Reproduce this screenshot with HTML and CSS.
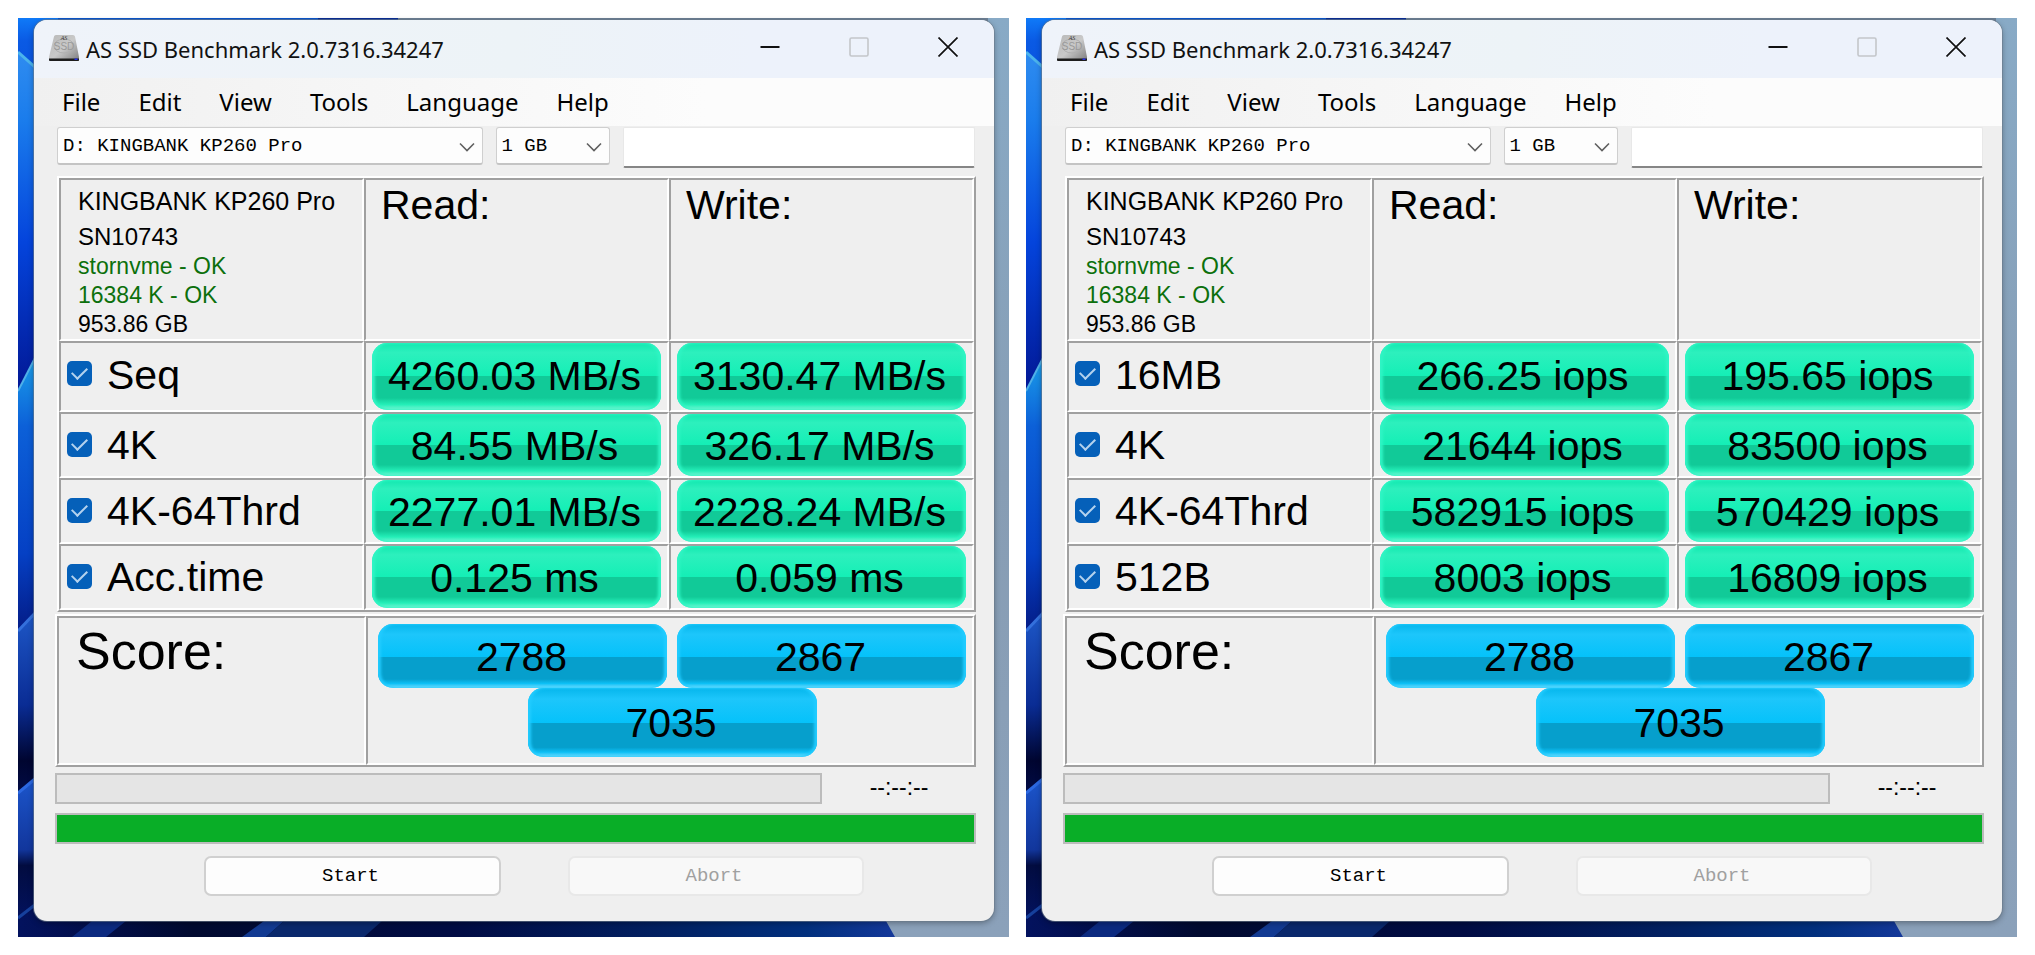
FILE: index.html
```html
<!DOCTYPE html>
<html lang="en">
<head>
<meta charset="utf-8">
<title>AS SSD Benchmark</title>
<link rel="stylesheet" href="styles.css">
</head>
<body>
<svg class="defs" aria-hidden="true">
  <defs>
    <linearGradient id="sky" x1="0" y1="0" x2="0" y2="1">
      <stop offset="0" stop-color="#0f7af8"/><stop offset=".06" stop-color="#0a5ae4"/><stop offset=".5" stop-color="#0438c8"/><stop offset="1" stop-color="#02108c"/>
    </linearGradient>
    <linearGradient id="petal" x1="0" y1="0" x2="0" y2="1">
      <stop offset="0" stop-color="#2f8cf0"/><stop offset=".2" stop-color="#1a7cec"/><stop offset=".55" stop-color="#0444dc"/><stop offset="1" stop-color="#021590"/>
    </linearGradient>
    <linearGradient id="petal2" x1="0" y1="0" x2="0" y2="1">
      <stop offset="0" stop-color="#1ba0ea"/><stop offset=".25" stop-color="#0c60d8"/><stop offset=".7" stop-color="#0540c4"/><stop offset="1" stop-color="#041880"/>
    </linearGradient>
    <linearGradient id="petal3" x1="0" y1="0" x2="0" y2="1">
      <stop offset="0" stop-color="#1e58c8"/><stop offset=".5" stop-color="#0a2c94"/><stop offset=".8" stop-color="#000530"/><stop offset="1" stop-color="#020c48"/>
    </linearGradient>
    <linearGradient id="petal4" x1="0" y1="0" x2="0" y2="1">
      <stop offset="0" stop-color="#1c56cc"/><stop offset=".45" stop-color="#12369c"/><stop offset=".55" stop-color="#020c40"/><stop offset="1" stop-color="#031468"/>
    </linearGradient>
    <linearGradient id="slate" x1="0" y1="0" x2="0" y2="1">
      <stop offset="0" stop-color="#88aac6"/><stop offset=".5" stop-color="#879db4"/><stop offset="1" stop-color="#8ba1ba"/>
    </linearGradient>
    <linearGradient id="floor" x1="0" y1="0" x2="1" y2="0">
      <stop offset="0" stop-color="#03125e"/><stop offset=".2" stop-color="#010a30"/><stop offset=".5" stop-color="#010c44"/><stop offset=".75" stop-color="#022264"/><stop offset=".9" stop-color="#02307e"/><stop offset="1" stop-color="#14389a"/>
    </linearGradient>
    <linearGradient id="metal" x1="0" y1="0" x2="1" y2="1">
      <stop offset="0" stop-color="#b8b8b8"/><stop offset=".5" stop-color="#c9c9c9"/><stop offset="1" stop-color="#7c7c7c"/>
    </linearGradient>
    <symbol id="wallpaper" viewBox="0 0 991 919" preserveAspectRatio="none">
      <path d="M0 0H991V919H0z" fill="url(#slate)"/>
      <path d="M0 0H380V4H0z" fill="#0b56cc"/>
      <path d="M300 0H380V4H300z" fill="#0a2f96"/>
      <path d="M380 0H970V4H380z" fill="#6d8095"/>
      <path d="M0 0H40V380H0z" fill="url(#sky)"/>
      <path d="M0 34L18 50V380H0z" fill="url(#petal)"/>
      <path d="M0 34L18 50" stroke="#4bb4ec" stroke-width="3"/>
      <path d="M0 373L18 338V620H0z" fill="url(#petal2)"/>
      <path d="M0 373L18 338" stroke="#4fb0e8" stroke-width="2"/>
      <path d="M0 613L18 594V780H0z" fill="url(#petal3)"/>
      <path d="M0 613L18 594" stroke="#3470dc" stroke-width="3"/>
      <path d="M0 775L18 760V919H0z" fill="url(#petal4)"/>
      <path d="M0 775L18 760" stroke="#2c68e0" stroke-width="3"/>
      <path d="M0 900L18 886" stroke="#16409c" stroke-width="3"/>
      <path d="M0 903L30 890V903H868L877 919H0z" fill="url(#floor)"/>
      <path d="M54 919L74 903H108L88 919z" fill="#0c2a80"/>
      <path d="M224 919L246 903H266L248 919z" fill="#123a92"/>
      <path d="M248 919L266 903H364L346 919z" fill="#0a286c"/>
    </symbol>
    <symbol id="drive" viewBox="0 0 30 26">
      <path d="M5 1.500Q5.300 0 7 0H24Q25.500 0 26 1.500L30 22V25Q30 26 29 26H1Q0 26 0 25V22z" fill="url(#metal)"/>
      <path d="M0 23.500H30V25Q30 26 29 26H1Q0 26 0 25z" fill="#1d1d1d"/>
      <path d="M25.500 23.500h3v1.500h-3z" fill="#2430e8"/>
      <ellipse cx="15" cy="11" rx="10" ry="7" fill="none" stroke="#b0b0b0"/>
      <text x="15" y="5" text-anchor="middle" class="drive-small">AS</text>
      <text x="15" y="15" text-anchor="middle" class="drive-large">SSD</text>
    </symbol>
    <symbol id="chevron" viewBox="0 0 16 10"><path d="M1 1.500L8 8.500L15 1.500" fill="none" stroke="#606060" stroke-width="1.600"/></symbol>
    <symbol id="minimize" viewBox="0 0 20 20"><path d="M.5 10H19.500" stroke="#111" stroke-width="2"/></symbol>
    <symbol id="maximize" viewBox="0 0 20 20"><rect x="1" y="1" width="18" height="18" rx="1.500" fill="none" stroke="#c3c6ca" stroke-width="1.600"/></symbol>
    <symbol id="close" viewBox="0 0 20 20"><path d="M.5 .5L19.500 19.500M19.500 .5L.5 19.500" stroke="#111" stroke-width="1.700"/></symbol>
  </defs>
</svg>

<main class="page">
  <section class="desktop">
    <svg class="wallpaper" aria-hidden="true"><use href="#wallpaper"/></svg>
    <div class="window">
      <header class="titlebar">
        <svg class="app-icon" aria-hidden="true"><use href="#drive"/></svg>
        <h1 class="title">AS SSD Benchmark 2.0.7316.34247</h1>
        <button class="control" aria-label="Minimize"><svg><use href="#minimize"/></svg></button>
        <button class="control" aria-label="Maximize" disabled><svg><use href="#maximize"/></svg></button>
        <button class="control" aria-label="Close"><svg><use href="#close"/></svg></button>
      </header>
      <nav class="menu">
        <button>File</button><button>Edit</button><button>View</button><button>Tools</button><button>Language</button><button>Help</button>
      </nav>
      <div class="toolbar">
        <div class="combo combo-drive"><select aria-label="Drive"><option>D: KINGBANK KP260 Pro</option></select><svg aria-hidden="true"><use href="#chevron"/></svg></div>
        <div class="combo combo-size"><select aria-label="Test size"><option>1 GB</option></select><svg aria-hidden="true"><use href="#chevron"/></svg></div>
        <input class="note" type="text" aria-label="Note">
      </div>
      <div class="content">
        <table class="results">
          <tr class="row-head">
            <td class="info"><p class="model">KINGBANK KP260 Pro</p><p class="serial">SN10743</p><p class="ok">stornvme - OK</p><p class="ok">16384 K - OK</p><p>953.86 GB</p></td>
            <th>Read:</th><th>Write:</th>
          </tr>
          <tr class="row-first"><td><label class="test"><input type="checkbox" checked>Seq</label></td><td><div class="pill">4260.03 MB/s</div></td><td><div class="pill">3130.47 MB/s</div></td></tr>
          <tr><td><label class="test"><input type="checkbox" checked>4K</label></td><td><div class="pill">84.55 MB/s</div></td><td><div class="pill">326.17 MB/s</div></td></tr>
          <tr><td><label class="test"><input type="checkbox" checked>4K-64Thrd</label></td><td><div class="pill">2277.01 MB/s</div></td><td><div class="pill">2228.24 MB/s</div></td></tr>
          <tr><td><label class="test"><input type="checkbox" checked>Acc.time</label></td><td><div class="pill">0.125 ms</div></td><td><div class="pill">0.059 ms</div></td></tr>
        </table>
        <div class="score">
          <h2 class="score-label">Score:</h2>
          <div class="score-values">
            <div class="pill blue">2788</div><div class="pill blue">2867</div><div class="pill blue total">7035</div>
          </div>
        </div>
        <div class="progress-row"><div class="bar" role="progressbar" aria-label="Test progress"></div><span class="time">--:--:--</span></div>
        <div class="bar full" role="progressbar" aria-label="Total progress" aria-valuenow="100"></div>
        <div class="actions"><button class="action">Start</button><button class="action" disabled>Abort</button></div>
      </div>
    </div>
  </section>

  <section class="desktop">
    <svg class="wallpaper" aria-hidden="true"><use href="#wallpaper"/></svg>
    <div class="window">
      <header class="titlebar">
        <svg class="app-icon" aria-hidden="true"><use href="#drive"/></svg>
        <h1 class="title">AS SSD Benchmark 2.0.7316.34247</h1>
        <button class="control" aria-label="Minimize"><svg><use href="#minimize"/></svg></button>
        <button class="control" aria-label="Maximize" disabled><svg><use href="#maximize"/></svg></button>
        <button class="control" aria-label="Close"><svg><use href="#close"/></svg></button>
      </header>
      <nav class="menu">
        <button>File</button><button>Edit</button><button>View</button><button>Tools</button><button>Language</button><button>Help</button>
      </nav>
      <div class="toolbar">
        <div class="combo combo-drive"><select aria-label="Drive"><option>D: KINGBANK KP260 Pro</option></select><svg aria-hidden="true"><use href="#chevron"/></svg></div>
        <div class="combo combo-size"><select aria-label="Test size"><option>1 GB</option></select><svg aria-hidden="true"><use href="#chevron"/></svg></div>
        <input class="note" type="text" aria-label="Note">
      </div>
      <div class="content">
        <table class="results">
          <tr class="row-head">
            <td class="info"><p class="model">KINGBANK KP260 Pro</p><p class="serial">SN10743</p><p class="ok">stornvme - OK</p><p class="ok">16384 K - OK</p><p>953.86 GB</p></td>
            <th>Read:</th><th>Write:</th>
          </tr>
          <tr class="row-first"><td><label class="test"><input type="checkbox" checked>16MB</label></td><td><div class="pill">266.25 iops</div></td><td><div class="pill">195.65 iops</div></td></tr>
          <tr><td><label class="test"><input type="checkbox" checked>4K</label></td><td><div class="pill">21644 iops</div></td><td><div class="pill">83500 iops</div></td></tr>
          <tr><td><label class="test"><input type="checkbox" checked>4K-64Thrd</label></td><td><div class="pill">582915 iops</div></td><td><div class="pill">570429 iops</div></td></tr>
          <tr><td><label class="test"><input type="checkbox" checked>512B</label></td><td><div class="pill">8003 iops</div></td><td><div class="pill">16809 iops</div></td></tr>
        </table>
        <div class="score">
          <h2 class="score-label">Score:</h2>
          <div class="score-values">
            <div class="pill blue">2788</div><div class="pill blue">2867</div><div class="pill blue total">7035</div>
          </div>
        </div>
        <div class="progress-row"><div class="bar" role="progressbar" aria-label="Test progress"></div><span class="time">--:--:--</span></div>
        <div class="bar full" role="progressbar" aria-label="Total progress" aria-valuenow="100"></div>
        <div class="actions"><button class="action">Start</button><button class="action" disabled>Abort</button></div>
      </div>
    </div>
  </section>
</main>
</body>
</html>
```
FILE: styles.css
```css
* { box-sizing: border-box; }
body { margin: 0; background: #fff; color: #000; font-family: "Liberation Sans", Arial, sans-serif; }
h1, h2, p { margin: 0; font-weight: 400; }
button { font-family: inherit; color: inherit; }
.defs { position: absolute; width: 0; height: 0; }

.page { display: grid; grid-template-columns: 1fr 1fr; gap: 17px; padding: 18px; }
.desktop { position: relative; padding: 2px 15px 16px 16px; }
.wallpaper { position: absolute; inset: 0; width: 100%; height: 100%; }

.window {
  position: relative;
  padding-bottom: 25px;
  background: #efefef;
  border-radius: 13px;
  box-shadow: 0 0 0 1px #6b7b8c99, 0 2px 6px #0005;
  overflow: hidden;
}

.titlebar { display: flex; align-items: center; height: 58px; padding: 0 2px 0 15px; background: linear-gradient(90deg, #eff3fa, #edf3f7 50%, #edf2fb 75%); }
.app-icon { width: 30px; height: 26px; margin: 0 7px 2px 0; }
.drive-small { font: italic 6px "Liberation Serif", serif; fill: #333; }
.drive-large { font: 10px "Liberation Sans", sans-serif; fill: #999; }
.title { flex: 1; font: 22px/30px "Noto Sans", sans-serif; white-space: nowrap; color: #111; }
.control { display: grid; place-items: center; width: 89px; height: 54px; padding: 0 0 4px; border: 0; background: none; }
.control svg { width: 20px; height: 20px; }

.menu { display: flex; gap: 38px; height: 48px; padding: 0 28px; background: linear-gradient(90deg, #f0f0f0, #fcfcfc 70%); }
.menu button { padding: 0; border: 0; background: none; font: 24px/32px "Noto Sans", sans-serif; }

.toolbar { display: flex; gap: 13px; align-items: flex-start; height: 42px; margin: 0 19px 8px 23px; padding-top: 1px; }
.combo { position: relative; }
.combo-drive { flex: 426 1 0; }
.combo-size { flex: 115 1 0; }
.combo select {
  appearance: none;
  width: 100%;
  height: 38px;
  padding: 0 30px 0 5px;
  border: 1px solid #cfcfcf;
  border-bottom: 2px solid #c4c4c4;
  border-radius: 3px;
  background: #fdfdfd;
  color: #000;
  font: 19px "Liberation Mono", monospace;
}
.combo svg { position: absolute; right: 8px; top: 15px; width: 16px; height: 10px; pointer-events: none; }
.note { flex: 350 1 0; min-width: 0; height: 41px; padding: 0; border: 1px solid #e8e8e8; border-bottom: 2px solid #868686; border-radius: 2px; background: #fff; }

.content { padding: 0 18px 0 21px; }
.results { width: calc(100% - 2px); margin-left: 2px; table-layout: fixed; border-spacing: 0; border: 2px solid; border-color: #fff #a0a0a0 #a0a0a0 #fff; }
.results tr { height: 66px; }
.results .row-head { height: 163px; }
.results .row-first { height: 71px; }
.results td, .results th { padding: 0 6px; border: 2px solid; border-color: #a0a0a0 #fff #fff #a0a0a0; }
.results th { padding: 1px 15px 0; text-align: left; vertical-align: top; font: 41px/48px "Liberation Sans", Arial, sans-serif; }
.results .info { padding: 4px 0 0 17px; vertical-align: top; font-size: 23px; line-height: 29px; white-space: nowrap; }
.info .model { font-size: 25px; line-height: 34px; }
.info .serial { margin-top: 4px; font-size: 24px; line-height: 30px; }
.info .ok { color: #0c700c; }

.test { display: flex; align-items: center; gap: 15px; font-size: 41px; line-height: 48px; white-space: nowrap; }
.row-first .test { padding-bottom: 4px; }
.test input { appearance: none; display: grid; place-items: center; width: 25px; height: 25px; margin: 0 0 2px; border-radius: 5px; background: #0560b9; }
.test input::before { content: ""; width: 13px; height: 7px; margin-bottom: 4px; border: solid #b4d2ee; border-width: 0 0 2px 2px; transform: rotate(-45deg); }

.pill {
  display: grid;
  place-items: center;
  height: 62px;
  padding: 1px 4px 0 0;
  border-radius: 15px;
  background: linear-gradient(#12e8b0 0, #2df0bd 14%, #14efb6 50%, #11ca98 50%, #11ca98 82%, #24efb8 92%, #7df5d5);
  box-shadow: inset 3px 0 3px #2ff5c4, inset -3px 0 3px #2ff5c4;
  font-size: 41px;
  line-height: 48px;
  white-space: nowrap;
}
.row-first .pill { height: 67px; padding: 0 4px 2px 0; }
.pill.blue {
  height: 64px;
  padding-right: 2px;
  background: linear-gradient(#05b6ec 0, #1dc6fb 16%, #05c2fa 51%, #069fcc 51%, #069fcc 86%, #0cc0f6 93%, #7de0ff);
  box-shadow: inset 3px 0 3px #22ccff, inset -3px 0 3px #22ccff;
}
.pill.total { height: 69px; }

.score { display: grid; grid-template-columns: 309fr 608fr; margin-top: 2px; border: 2px solid; border-color: #fff #a0a0a0 #a0a0a0 #fff; }
.score-label, .score-values { border: 2px solid; border-color: #a0a0a0 #fff #fff #a0a0a0; }
.score-label { padding: 4px 17px; font-size: 52px; line-height: 58px; }
.score-values { display: flex; flex-wrap: wrap; justify-content: center; column-gap: 10px; padding: 6px 6px 6px 10px; }
.score-values .pill { width: calc(50% - 5px); }

.progress-row { display: flex; align-items: center; margin: 6px 0 9px; }
.bar { height: 31px; border: 2px solid #bcbcbc; background: #e5e5e5; }
.progress-row .bar { flex: 763 1 0; }
.time { flex: 154 1 0; padding: 0 0 3px; text-align: center; font-size: 23px; line-height: 28px; }
.bar.full { background: #09ae27; }

.actions { display: grid; grid-template-columns: 297fr 296fr; gap: 67px; margin-top: 12px; padding: 0 112px 0 149px; }
.action { height: 40px; padding: 0 4px 0 0; border: 2px solid #d0d0d0; border-radius: 7px; background: #fdfdfd; font: 19px "Liberation Mono", monospace; }
.action:disabled { border-color: #e8e8e8; background: #f8f8f8; color: #a0a0a0; }
```
